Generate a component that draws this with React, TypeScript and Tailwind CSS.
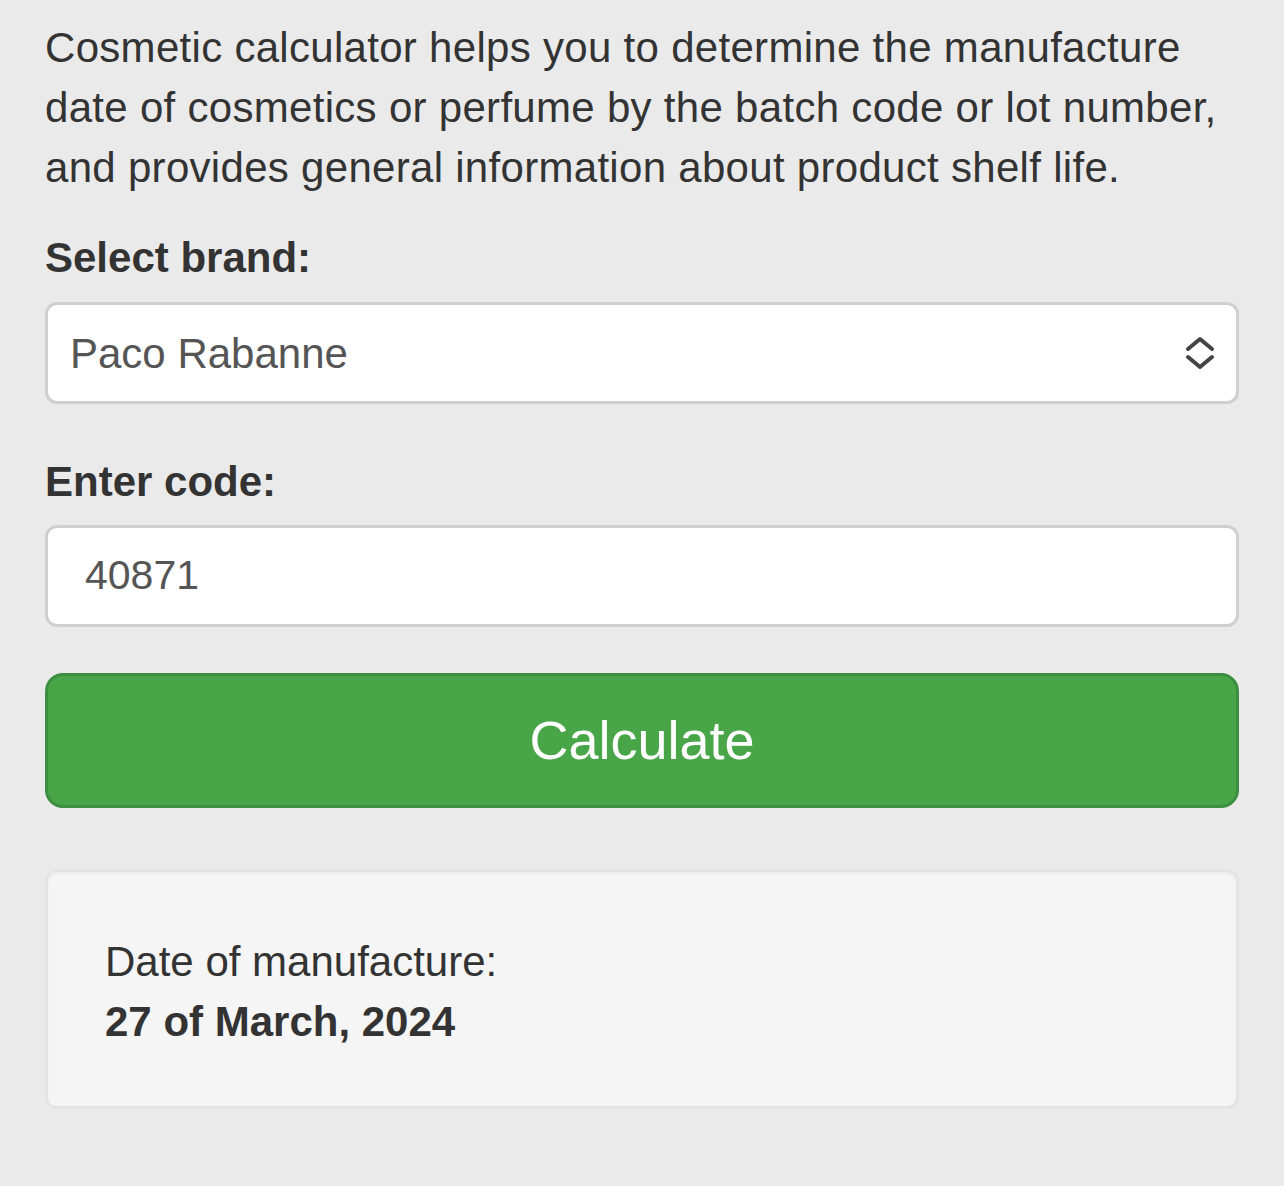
import React from "react";

const font = { fontFamily: '"Liberation Sans", Arial, sans-serif' };

export default function App() {
  return (
    <div
      className="min-h-[1186px] w-[1284px] bg-[#eaeaea] px-[45px] pt-[18px] text-[#333333]"
      style={font}
    >
      <p className="text-[42px] leading-[60px] tracking-[0.3px]">
        Cosmetic calculator helps you to determine the manufacture date of
        cosmetics or perfume by the batch code or lot number, and provides
        general information about product shelf life.
      </p>

      <label className="mt-[30px] block text-[42px] font-bold leading-[60px]">
        Select brand:
      </label>
      <div className="mt-[14px] flex h-[102px] items-center justify-between rounded-[12px] border-[3px] border-[#cfcfcf] bg-white pl-[22px] pr-[20px]">
        <span className="text-[42px] text-[#555555]">Paco Rabanne</span>
        <svg
          width="32"
          height="34"
          viewBox="0 0 32 34"
          fill="none"
          stroke="#444"
          strokeWidth="4"
          strokeLinecap="round"
          strokeLinejoin="round"
        >
          <path d="M4 13 L16 3 L28 13" />
          <path d="M4 21 L16 31 L28 21" />
        </svg>
      </div>

      <label className="mt-[48px] block text-[42px] font-bold leading-[60px]">
        Enter code:
      </label>
      <div className="mt-[13px] flex h-[102px] items-center rounded-[12px] border-[3px] border-[#cfcfcf] bg-white pl-[37px]">
        <span className="text-[41px] text-[#555555]">40871</span>
      </div>

      <button className="mt-[46px] flex h-[135px] w-full items-center justify-center rounded-[18px] border-[3px] border-[#3e8e41] bg-[#48a648] text-[54px] text-white">
        Calculate
      </button>

      <div className="mt-[61px] h-[240px] rounded-[12px] border-[3px] border-[#e4e4e4] bg-[#f5f5f5] pl-[57px] pt-[60px] shadow-[inset_0_2px_3px_rgba(0,0,0,0.04)]">
        <div className="text-[42px] leading-[60px]">Date of manufacture:</div>
        <div className="text-[42px] font-bold leading-[60px]">
          27 of March, 2024
        </div>
      </div>
    </div>
  );
}
